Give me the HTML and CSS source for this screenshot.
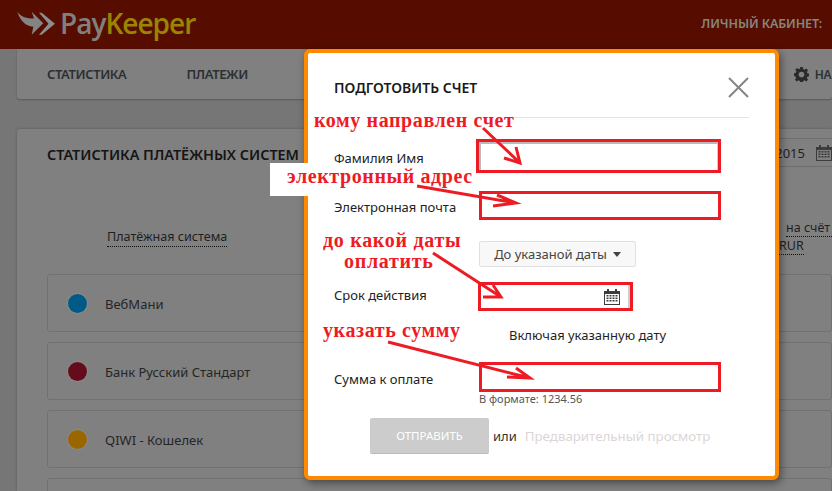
FILE: index.html
```html
<!DOCTYPE html>
<html lang="ru">
<head>
<meta charset="utf-8">
<title>PayKeeper</title>
<link rel="stylesheet" href="styles.css">
</head>
<body>
<header class="topbar">
  <div class="logo">
    <svg class="logo-mark" width="39" height="25" viewBox="0 0 39 25"><path fill="#848484" d="M0.300 0.700C4 6 10 7.500 17 7.500L14.700 0.700L26.300 12.300L14.700 23.700L16.300 15.700C8 15 3 9 0.300 0.700Z"/><path fill="#8c8c8c" d="M24.700 1.700L38 12.700L24.700 23.700L22 23.700L31.500 12.700L22 1.700Z"/></svg>
    <span class="logo-pay">Pay</span><span class="logo-keeper">Keeper</span>
  </div>
  <div class="account">ЛИЧНЫЙ КАБИНЕТ:</div>
</header>
<nav class="navcard">
  <span class="nav-item">СТАТИСТИКА</span>
  <span class="nav-item">ПЛАТЕЖИ</span>
  <span class="nav-settings">
    <svg width="15" height="15" viewBox="0 0 16 16"><path fill="#2a2a2a" fill-rule="evenodd" d="M6.600 0h2.800l.4 2.200 1.300.6 1.900-1.300 2 2-1.300 1.900.6 1.300 2.200.4v2.800l-2.200.4-.6 1.300 1.300 1.900-2 2-1.900-1.300-1.300.6-.4 2.200H6.600l-.4-2.200-1.300-.6-1.900 1.300-2-2 1.300-1.900-.6-1.300L0 9.400V6.600l2-.4.600-1.300-1.300-1.900 2-2 1.900 1.300 1.300-.6zM8 5a3 3 0 1 0 0 6 3 3 0 0 0 0-6z"/></svg>
    <span>НА</span>
  </span>
</nav>
<section class="statcard">
  <div class="stat-head">
    <h2 class="stat-title">СТАТИСТИКА ПЛАТЁЖНЫХ СИСТЕМ</h2>
    <div class="datebox">
      <span>2015</span>
      <svg width="16" height="16" viewBox="0 0 16 16"><use href="#calendar"/></svg>
    </div>
  </div>
  <div class="columns">
    <span class="col-name">Платёжная система</span>
    <div class="col-sum">
      <span class="sum-line sum-top">на счёт</span>
      <span class="sum-line">RUR</span>
    </div>
  </div>
  <div class="row"><i class="dot dot-blue"></i>ВебМани</div>
  <div class="row"><i class="dot dot-red"></i>Банк Русский Стандарт</div>
  <div class="row"><i class="dot dot-amber"></i>QIWI - Кошелек</div>
  <div class="row"></div>
</section>

<div class="modal">
  <div class="modal-head">
    <h1 class="modal-title">ПОДГОТОВИТЬ СЧЕТ</h1>
    <svg width="21" height="21" viewBox="0 0 21 21"><path d="M1 1L20 20M20 1L1 20" stroke="#858585" stroke-width="2" fill="none"/></svg>
  </div>
  <div class="field f-name"><label class="lbl">Фамилия Имя</label><div class="input"></div></div>
  <div class="field f-mail"><label class="lbl">Электронная почта</label><div class="input"></div></div>
  <div class="dropdown-row"><div class="dropdown">До указаной даты<i class="caret"></i></div></div>
  <div class="field f-date"><label class="lbl">Срок действия</label><div class="input">
    <svg width="16" height="16" viewBox="0 0 16 16"><defs><g id="calendar"><path fill="#3c3c3c" fill-rule="evenodd" d="M0 2h3V0h2v2h6V0h2v2h3v14H0zM1 5v10h14V5z"/><path fill="#3c3c3c" d="M2.500 6h2v1.500h-2zM5.500 6h2v1.500h-2zM8.500 6h2v1.500h-2zM11.500 6h2v1.500h-2zM2.500 8.500h2V10h-2zM5.500 8.500h2V10h-2zM8.500 8.500h2V10h-2zM11.500 8.500h2V10h-2zM2.500 11h2v1.500h-2zM5.500 11h2v1.500h-2zM8.500 11h2v1.500h-2zM11.500 11h2v1.500h-2z"/></g></defs><use href="#calendar"/></svg>
  </div></div>
  <div class="include">Включая указанную дату</div>
  <div class="field f-sum"><label class="lbl">Сумма к оплате</label><div class="input"></div></div>
  <div class="hint">В формате: 1234.56</div>
  <div class="actions">
    <span class="send">ОТПРАВИТЬ</span>
    <span class="or">или</span>
    <span class="preview">Предварительный просмотр</span>
  </div>
</div>

<div class="patch"></div>
<div class="note note-1">кому направлен счет</div>
<div class="note note-2">электронный адрес</div>
<div class="note note-3">до какой даты<br><span class="note-line">оплатить</span></div>
<div class="note note-4">указать сумму</div>
<svg class="arrows" width="832" height="491" viewBox="0 0 832 491">
  <g stroke="#ed1c24" stroke-width="3" fill="none">
    <path d="M483 128L520 163M504 158L520 163L516 147"/>
    <path d="M417 186L516 203M493 206L516 203L497 195"/>
    <path d="M433 253L501 297M483 297L501 297L493 285"/>
    <path d="M388 342L530 378M507 377L530 378L516 368"/>
  </g>
</svg>
</body>
</html>
```
FILE: styles.css
```css
* { box-sizing: border-box; }
html, body { margin: 0; width: 832px; height: 491px; overflow: hidden; }
body {
  position: relative;
  background: #767676;
  font-family: "Noto Sans", "Liberation Sans", sans-serif;
  font-size: 13px;
  color: #1f1f1f;
}
.topbar {
  height: 49px;
  background: #560d00;
  display: flex;
  justify-content: space-between;
  align-items: center;
  padding: 0 10px 3px 17px;
}
.logo { display: flex; align-items: center; font-family: "Open Sans", sans-serif; font-size: 28px; font-weight: 600; letter-spacing: -1px; }
.logo-mark { margin-right: 4px; }
.logo-pay { color: #808080; }
.logo-keeper { color: #9a8500; }
.account { color: #86857d; font-size: 12.500px; font-weight: 600; letter-spacing: -.1px; }
.navcard {
  height: 50px;
  margin-left: 17px;
  background: #808080;
  border-radius: 0 0 3px 3px;
  box-shadow: 0 1px 2px rgba(0,0,0,.25);
  display: flex;
  align-items: center;
  gap: 60px;
  padding-left: 30px;
  color: #2c3033;
  white-space: nowrap;
}
.nav-item { font-weight: 600; font-size: 13px; letter-spacing: -.4px; }
.nav-settings { display: flex; align-items: center; gap: 6px; margin-left: 486px; font-weight: 600; font-size: 12px; letter-spacing: -.5px; }
.statcard {
  margin: 30px 0 0 17px;
  height: 362px;
  overflow: hidden;
  background: #808080;
  border-radius: 3px 0 0 0;
  box-shadow: 0 0 3px rgba(0,0,0,.25);
  padding-left: 30px;
}
.stat-head { height: 38px; position: relative; display: flex; align-items: center; padding-top: 12px; }
.stat-title { margin: 0; font-size: 14.400px; font-weight: 600; color: #151515; white-space: nowrap; }
.datebox {
  position: absolute; right: 0; top: 9px; width: 145px; height: 29px;
  border-top: 1px solid #6e6e6e; border-bottom: 1px solid #6e6e6e;
  display: flex; align-items: center; justify-content: flex-end; gap: 11px; font-size: 13px; color: #222;
}
.columns { height: 107px; position: relative; }
.col-name { position: absolute; left: 60px; top: 61px; font-size: 12.600px; line-height: 18px; border-bottom: 1px dotted #111; }
.col-sum { position: absolute; left: 732px; top: 52px; display: flex; flex-direction: column; align-items: flex-start; white-space: nowrap; font-size: 12.500px; }
.sum-line { line-height: 17px; border-bottom: 1px dotted #111; }
.sum-top { margin-left: 7px; width: 46px; }
.row {
  height: 58px;
  margin-bottom: 10px;
  border: 1px solid #717171;
  border-radius: 3px;
  display: flex;
  align-items: center;
  padding-left: 20px;
  padding-top: 1px;
  font-size: 13px;
  color: #252525;
}
.dot { width: 19px; height: 19px; border-radius: 50%; margin-right: 18px; box-shadow: 0 0 0 1px rgba(255,255,255,.08); }
.dot-blue { background: #005a88; }
.dot-red { background: #640c1c; }
.dot-amber { background: #996600; }

.modal {
  position: absolute;
  left: 304px; top: 49px;
  width: 475px; height: 431px;
  background: #fff;
  border: 4px solid #ff8a00;
  border-radius: 6px;
  box-shadow: 2px 3px 8px rgba(0,0,0,.45);
  padding-left: 26px;
}
.modal-head { height: 65px; width: 415px; border-bottom: 1px solid #e4e4e4; display: flex; justify-content: space-between; align-items: center; padding-top: 5px; }
.modal-title { margin: 0; font-size: 14px; font-weight: 600; color: #1a1a1a; }
.field { display: flex; align-items: center; }
.lbl { width: 145px; flex: none; color: #222; padding-top: 3px; }
.input { background: #fff; border: 3px solid #ed1c24; width: 242px; height: 29px; }
.f-name { margin-top: 21px; }
.f-name .lbl { width: 142px; }
.f-name .input { width: 245px; height: 34px; box-shadow: inset 2px 2px 0 #bbb, inset -1px 0 0 #ccc; }
.f-mail { margin-top: 18px; }
.f-date { margin-top: 15px; }
.f-date .lbl { width: 144px; padding: 0 0 3px; }
.f-date .input { width: 155px; display: flex; align-items: center; justify-content: flex-end; padding-right: 10px; box-shadow: inset -2px 0 0 #ccc; }
.f-sum { margin-top: 17px; }
.f-sum .input { height: 30px; }
.dropdown-row { margin: 21px 0 0 145px; }
.dropdown { width: 157px; height: 26px; background: #f8f8f8; border: 1px solid #e0e0e0; border-radius: 2px; display: flex; align-items: center; justify-content: center; color: #444; font-size: 13px; }
.caret { border: 4px solid transparent; border-top: 5px solid #444; border-bottom: 0; margin-left: 6px; }
.include { margin: 15px 0 0 175px; padding-bottom: 1px; line-height: 18px; }
.hint { margin: 0 0 0 145px; font-size: 11px; line-height: 14px; color: #555; }
.actions { margin: 12px 0 0 36px; display: flex; align-items: center; white-space: nowrap; }
.send { width: 119px; height: 36px; background: #ccc; border-bottom: 1px solid #bbb; border-radius: 2px; color: #fff; font-size: 11.500px; display: flex; align-items: center; justify-content: center; }
.or { margin-left: 4px; color: #333; }
.preview { margin-left: 8px; color: #dcd6d8; font-size: 13.300px; }

.patch { position: absolute; left: 270px; top: 163px; width: 66px; height: 33px; background: #fff; }
.note {
  position: absolute;
  font-family: "Liberation Serif", serif;
  font-weight: 700;
  font-size: 20px;
  letter-spacing: .6px;
  line-height: 21px;
  color: #ed1c24;
  white-space: nowrap;
}
.note-1 { left: 314px; top: 110px; background: #fff; }
.note-2 { left: 287px; top: 166px; }
.note-3 { left: 323px; top: 230px; letter-spacing: .7px; }
.note-line { margin-left: 21px; }
.note-4 { left: 323px; top: 320px; }
.arrows { position: absolute; left: 0; top: 0; pointer-events: none; }
```
